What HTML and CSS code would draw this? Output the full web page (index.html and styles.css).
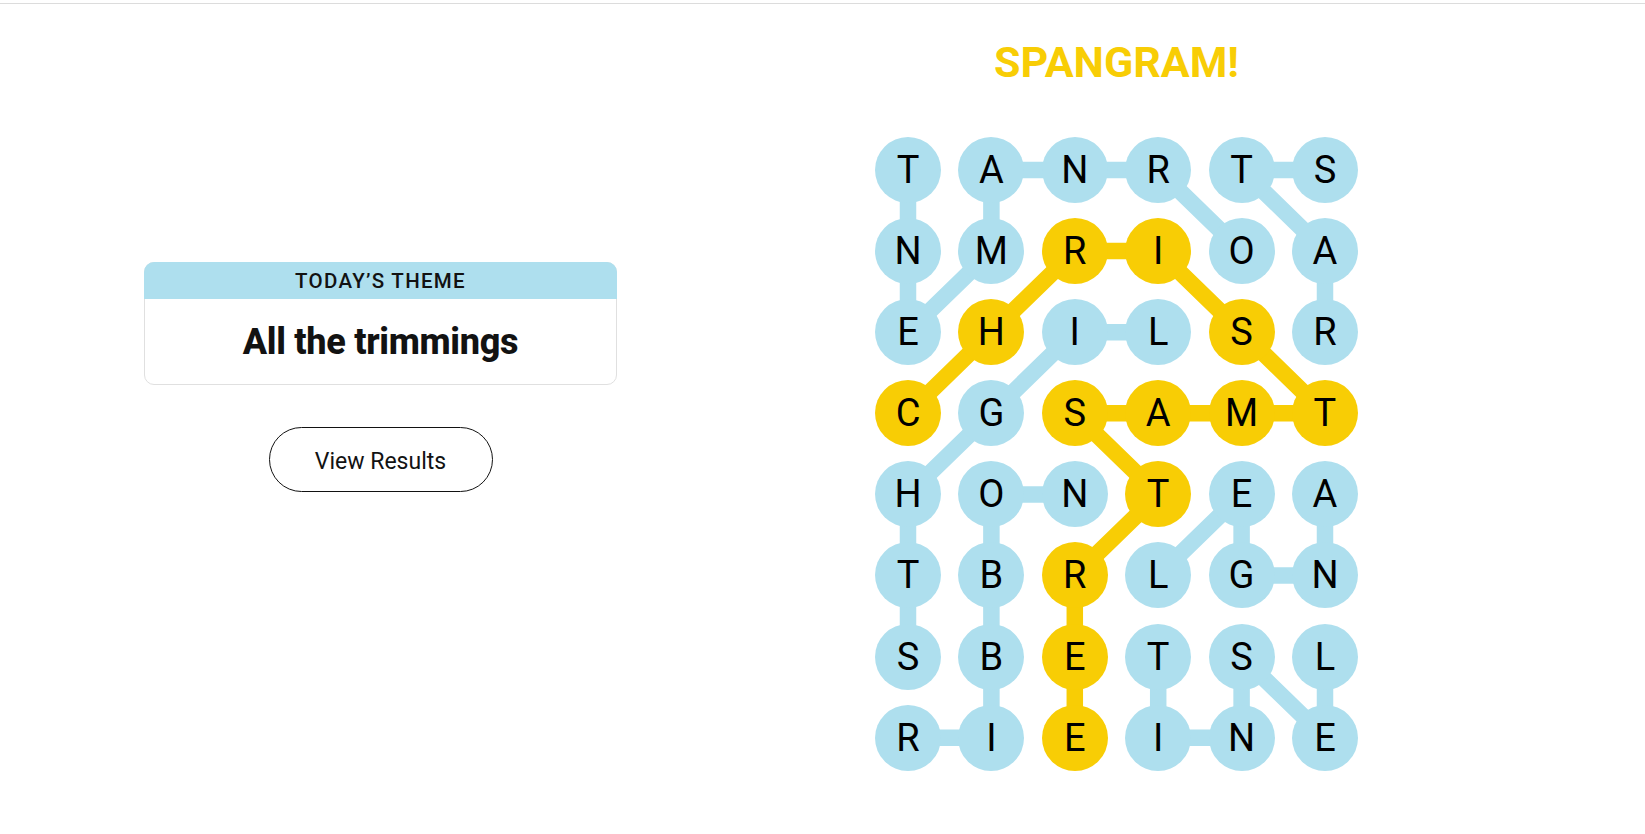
FILE: index.html
```html
<!DOCTYPE html>
<html lang="en">
<head>
<meta charset="utf-8">
<title>Strands</title>
<link rel="stylesheet" href="styles.css">
</head>
<body>
<div class="topbar"></div>
<main class="page">
  <section class="left">
    <div class="theme-card">
      <div class="theme-head">TODAY’S THEME</div>
      <div class="theme-body">All the trimmings</div>
    </div>
    <button class="results-btn">View Results</button>
  </section>
  <section class="right">
    <h2 class="spangram">SPANGRAM!</h2>
    <div class="board">
      <svg class="links" width="483" height="634" viewBox="0 0 483 634">
        <g class="blue">
          <polyline points="33,33 33,114.1 33,195.2 116.4,114.1 116.4,33 199.8,33 283.2,33 366.6,114.1"/>
          <polyline points="450,33 366.6,33 450,114.1 450,195.2"/>
          <polyline points="283.2,195.2 199.8,195.2 116.4,276.3 33,357.4 33,438.5 33,519.6"/>
          <polyline points="33,600.7 116.4,600.7 116.4,519.6 116.4,438.5 116.4,357.4 199.8,357.4"/>
          <polyline points="450,357.4 450,438.5 366.6,438.5 366.6,357.4 283.2,438.5"/>
          <polyline points="283.2,519.6 283.2,600.7 366.6,600.7 366.6,519.6 450,600.7 450,519.6"/>
        </g>
        <g class="yellow">
          <polyline points="33,276.3 116.4,195.2 199.8,114.1 283.2,114.1 366.6,195.2 450,276.3 366.6,276.3 283.2,276.3 199.8,276.3 283.2,357.4 199.8,438.5 199.8,519.6 199.8,600.7"/>
        </g>
      </svg>
      <div class="grid">
        <div class="cell">T</div><div class="cell">A</div><div class="cell">N</div><div class="cell">R</div><div class="cell">T</div><div class="cell">S</div>
        <div class="cell">N</div><div class="cell">M</div><div class="cell sp">R</div><div class="cell sp">I</div><div class="cell">O</div><div class="cell">A</div>
        <div class="cell">E</div><div class="cell sp">H</div><div class="cell">I</div><div class="cell">L</div><div class="cell sp">S</div><div class="cell">R</div>
        <div class="cell sp">C</div><div class="cell">G</div><div class="cell sp">S</div><div class="cell sp">A</div><div class="cell sp">M</div><div class="cell sp">T</div>
        <div class="cell">H</div><div class="cell">O</div><div class="cell">N</div><div class="cell sp">T</div><div class="cell">E</div><div class="cell">A</div>
        <div class="cell">T</div><div class="cell">B</div><div class="cell sp">R</div><div class="cell">L</div><div class="cell">G</div><div class="cell">N</div>
        <div class="cell">S</div><div class="cell">B</div><div class="cell sp">E</div><div class="cell">T</div><div class="cell">S</div><div class="cell">L</div>
        <div class="cell">R</div><div class="cell">I</div><div class="cell sp">E</div><div class="cell">I</div><div class="cell">N</div><div class="cell">E</div>
      </div>
    </div>
  </section>
</main>
</body>
</html>
```
FILE: styles.css
```css
html, body {
  margin: 0;
  padding: 0;
  background: #ffffff;
  color: #000000;
  font-family: Roboto, "Liberation Sans", Arial, sans-serif;
}

.topbar {
  height: 3px;
  border-bottom: 1px solid #dcdcdc;
}

.page {
  display: flex;
  align-items: flex-start;
}

.left {
  width: 761px;
  display: flex;
  flex-direction: column;
  align-items: center;
  padding-top: 258px;
}

.theme-card {
  width: 471px;
  border: 1px solid #e0e0e0;
  border-radius: 10px;
  background: #fff;
}

.theme-head {
  margin: -1px -1px 0;
  height: 37px;
  border-radius: 10px 10px 0 0;
  background: #aedfee;
  display: flex;
  align-items: center;
  justify-content: center;
  padding-top: 1px;
  box-sizing: border-box;
  font-size: 20.5px;
  font-weight: 500;
  letter-spacing: 1.3px;
  color: #121212;
}

.theme-body {
  height: 85px;
  display: flex;
  align-items: center;
  justify-content: center;
  font-size: 36px;
  font-weight: 800;
  color: #121212;
  letter-spacing: -0.3px;
}

.results-btn {
  margin-top: 42px;
  width: 224px;
  height: 65px;
  border: 1px solid #121212;
  border-radius: 33px;
  background: #fff;
  font-family: Roboto, "Liberation Sans", Arial, sans-serif;
  font-size: 23px;
  color: #121212;
  padding: 3px 0 0;
}

.right {
  width: 711px;
  display: flex;
  flex-direction: column;
  align-items: center;
  padding-top: 33px;
}

.spangram {
  margin: 0;
  font-size: 43px;
  line-height: 50px;
  font-weight: 700;
  color: #f8cd05;
}

.board {
  position: relative;
  margin-top: 50px;
  width: 483px;
  height: 634px;
}

.links {
  position: absolute;
  left: 0;
  top: 0;
  z-index: 0;
}

.links polyline {
  fill: none;
  stroke-width: 16.5;
  stroke-linejoin: round;
  stroke-linecap: butt;
}

.links .blue polyline {
  stroke: #aedfee;
}

.links .yellow polyline {
  stroke: #f8cd05;
}

.grid {
  position: relative;
  z-index: 1;
  display: grid;
  grid-template-columns: repeat(6, 66px);
  grid-auto-rows: 66px;
  column-gap: 17.4px;
  row-gap: 15.1px;
}

.cell {
  width: 66px;
  height: 66px;
  border-radius: 50%;
  background: #aedfee;
  display: flex;
  align-items: center;
  justify-content: center;
  font-size: 38px;
  font-weight: 400;
  color: #000;
}

.cell.sp {
  background: #f8cd05;
}
```
